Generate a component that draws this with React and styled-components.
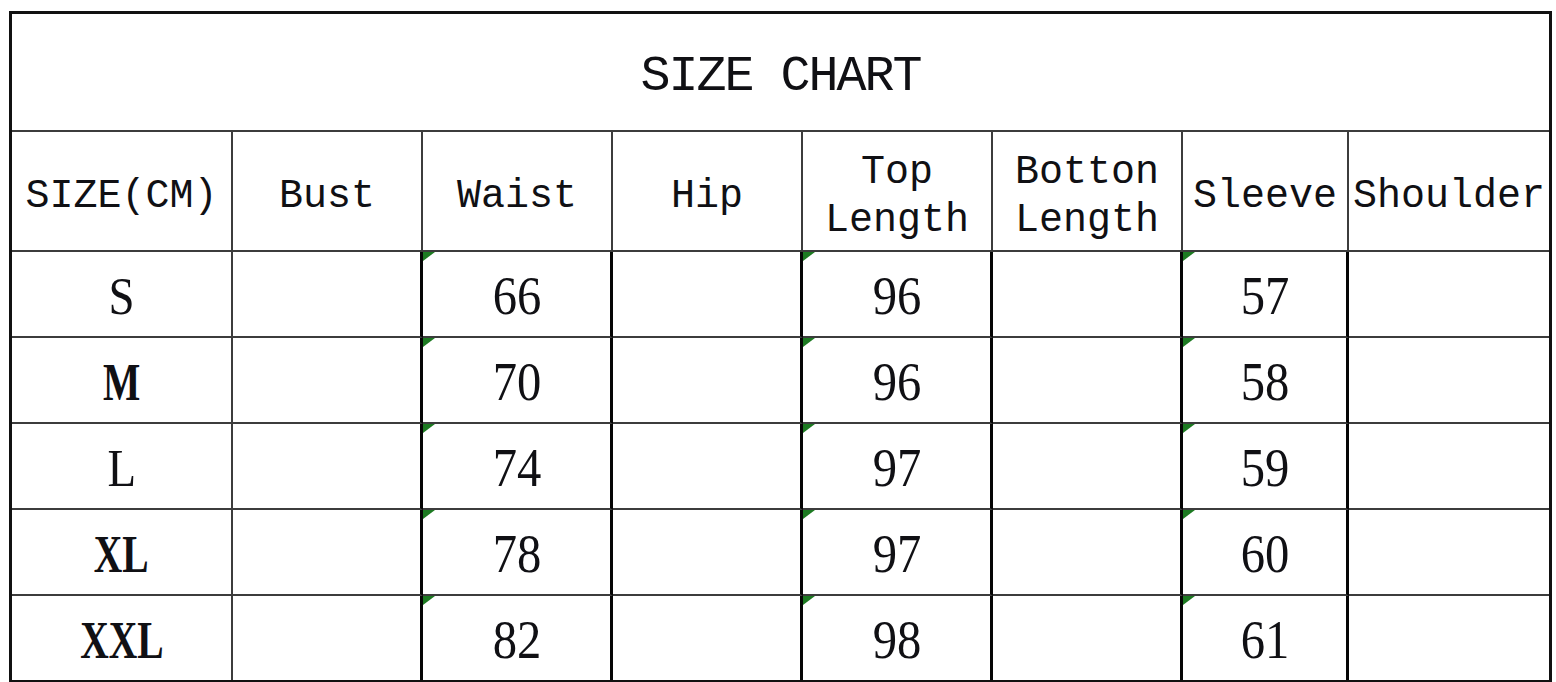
import React from 'react';
import styled, { createGlobalStyle } from 'styled-components';

const GlobalStyle = createGlobalStyle`
    html, body {
        margin: 0;
        padding: 0;
        background: #fff;
    }
    * {
        box-sizing: border-box;
    }
`

const Page = styled.div`
    padding: 11px 0 0 9px;
    width: 1556px;
    height: 682px;
    overflow: hidden;
`

const Table = styled.div`
    display: grid;
    grid-template-columns: 221px 190px 190px 190px 190px 190px 166px 200px;
    grid-template-rows: 118px 120px repeat(4, 86px) 84px;
    width: 1543px;
    border: 3px solid #111;
    color: #101014;
`

const TitleCell = styled.div`
    grid-column: 1 / -1;
    display: flex;
    align-items: center;
    justify-content: center;
    border-bottom: 2px solid #3c3c3c;
    font-family: "Liberation Mono", "DejaVu Sans Mono", monospace;
    font-size: 50px;
    letter-spacing: -2px;
    padding-top: 9px;
`

const HeadCell = styled.div`
    display: flex;
    align-items: center;
    justify-content: center;
    text-align: center;
    border-bottom: 2px solid #3c3c3c;
    border-right: ${p => (p.$last ? 'none' : '2px solid #3c3c3c')};
    font-family: "Liberation Mono", "DejaVu Sans Mono", monospace;
    font-size: 40px;
    line-height: 48px;
    white-space: pre-line;
    padding-top: 12px;
`

const DataCell = styled.div`
    position: relative;
    display: flex;
    align-items: center;
    justify-content: center;
    border-bottom: ${p => (p.$lastRow ? 'none' : '2px solid #3c3c3c')};
    border-right: ${p => (p.$last ? 'none' : p.$thick ? '3px solid #050505' : '2px solid #3c3c3c')};
    padding-top: 4px;
`

// little green "number stored as text" marker in the corner
const Flag = styled.span`
    position: absolute;
    top: 0;
    left: 0;
    width: 0;
    height: 0;
    border-top: 9px solid #1d7a22;
    border-right: 12px solid transparent;
`

const SizeLabel = styled.span`
    display: inline-block;
    font-family: "Liberation Serif", "Times New Roman", serif;
    font-size: 52px;
    font-weight: ${p => (p.$bold ? 700 : 400)};
    transform: scaleX(${p => (p.$bold ? 0.76 : 0.9)});
`

const Value = styled.span`
    display: inline-block;
    font-family: "Liberation Serif", "Times New Roman", serif;
    font-size: 54px;
    transform: scaleX(0.9);
`

const headers = ['SIZE(CM)', 'Bust', 'Waist', 'Hip', 'Top\nLength', 'Botton\nLength', 'Sleeve', 'Shoulder'];

const rows = [
    { size: 'S', bold: false, waist: 66, top: 96, sleeve: 57 },
    { size: 'M', bold: true, waist: 70, top: 96, sleeve: 58 },
    { size: 'L', bold: false, waist: 74, top: 97, sleeve: 59 },
    { size: 'XL', bold: true, waist: 78, top: 97, sleeve: 60 },
    { size: 'XXL', bold: true, waist: 82, top: 98, sleeve: 61 },
];

const SizeRow = ({ row, lastRow }) => {
    const cells = [null, row.waist, null, row.top, null, row.sleeve, null];
    return (<>
        <DataCell $lastRow={lastRow}>
            <SizeLabel $bold={row.bold}>{row.size}</SizeLabel>
        </DataCell>
        {cells.map((v, i) => (
            <DataCell key={i} $thick $last={i === cells.length - 1} $lastRow={lastRow}>
                {v !== null && <Flag />}
                {v !== null && <Value>{v}</Value>}
            </DataCell>
        ))}
    </>);
}

export default function App() {
    return (<>
        <GlobalStyle />
        <Page>
            <Table>
                <TitleCell>SIZE CHART</TitleCell>
                {headers.map((h, i) => (
                    <HeadCell key={h} $last={i === headers.length - 1}>{h}</HeadCell>
                ))}
                {rows.map((r, i) => (
                    <SizeRow key={r.size} row={r} lastRow={i === rows.length - 1} />
                ))}
            </Table>
        </Page>
    </>);
}
